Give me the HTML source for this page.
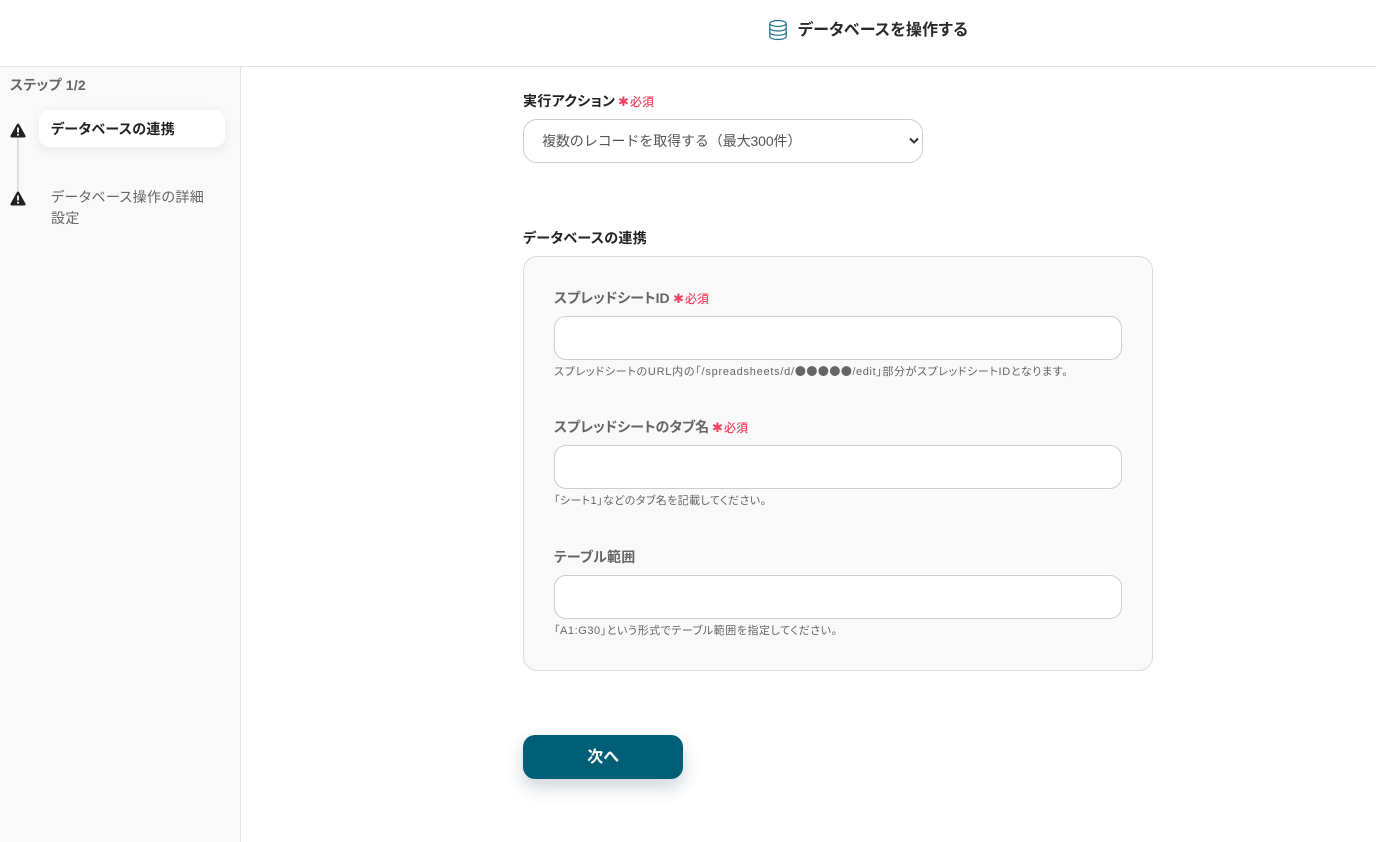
<!DOCTYPE html>
<html lang="ja">
<head>
<meta charset="utf-8">
<style>
html,body{margin:0;padding:0;width:1376px;height:842px;overflow:hidden;background:#fff;font-family:"Liberation Sans","Noto Sans CJK JP",sans-serif;color:#2a2a2a;font-feature-settings:"palt"}
.a{position:absolute;white-space:nowrap}
.b{font-weight:700}
.req{color:#f5405f;font-size:12px;font-weight:500;line-height:16px}
.star{color:#f5405f;font-family:"DejaVu Sans",sans-serif;font-size:13px;line-height:16px}
.lab{font-size:14px;font-weight:700;color:#666;line-height:20px}
.lab2{font-size:14px;font-weight:700;color:#222;line-height:20px;letter-spacing:.33px}
.inp{position:absolute;left:554px;width:566px;height:42px;background:#fff;border:1px solid #c8ced8;border-radius:12px}
.help{font-size:11px;color:#666;line-height:16px}
.c{font-family:"Noto Sans CJK JP",sans-serif;font-feature-settings:normal;letter-spacing:.5px}
</style>
</head>
<body>
<div class="a" style="left:0;top:66px;width:1376px;height:1px;background:#e2e2e2"></div>
<svg class="a" style="left:768px;top:19px" width="20" height="22" viewBox="0 0 20 22" fill="none" stroke="#1f6f8b" stroke-width="1.2">
<ellipse cx="10" cy="4.5" rx="8.2" ry="3"/>
<path d="M1.8 4.5V17.5C1.8 19.2 5.5 20.5 10 20.5S18.2 19.2 18.2 17.5V4.5"/>
<path d="M1.8 9C1.8 10.7 5.500 12 10 12S18.200 10.700 18.200 9"/>
<path d="M1.8 13.3C1.8 15 5.500 16.300 10 16.300S18.200 15 18.200 13.300"/>
</svg>
<div class="a b" style="left:798px;top:19px;font-size:16px;line-height:23px;color:#2a2a2a;letter-spacing:.27px">データベースを操作する</div>

<div class="a" style="left:0;top:67px;width:240px;height:775px;background:#f9f9f9;border-right:1px solid #e2e2e2"></div>
<div class="a b" style="left:10px;top:75px;font-size:14px;line-height:20px;color:#666;letter-spacing:.2px">ステップ 1/2</div>
<div class="a" style="left:17px;top:136px;width:2px;height:60px;background:#e0e0e0"></div>
<svg class="a" style="left:10px;top:123px" width="16" height="15" viewBox="0 0 16 15"><path d="M8 .5a1.3 1.3 0 0 1 1.1.7l6.3 11.3a1.3 1.3 0 0 1-1.1 2H1.7a1.3 1.300 0 0 1-1.1-2L6.900 1.200A1.300 1.300 0 0 1 8 .5z" fill="#222"/><rect x="7.100" y="4.500" width="1.800" height="5" fill="#fff"/><rect x="7.100" y="10.800" width="1.800" height="1.800" fill="#fff"/></svg>
<svg class="a" style="left:10px;top:191px" width="16" height="15" viewBox="0 0 16 15"><path d="M8 .5a1.3 1.3 0 0 1 1.1.7l6.3 11.3a1.3 1.3 0 0 1-1.1 2H1.7a1.3 1.300 0 0 1-1.1-2L6.900 1.200A1.300 1.300 0 0 1 8 .5z" fill="#222"/><rect x="7.100" y="4.500" width="1.800" height="5" fill="#fff"/><rect x="7.100" y="10.800" width="1.800" height="1.800" fill="#fff"/></svg>
<div class="a" style="left:39px;top:110px;width:186px;height:37px;background:#fff;border-radius:10px;box-shadow:0 3px 12px rgba(0,0,0,.07)"></div>
<div class="a b" style="left:51px;top:119px;font-size:14px;line-height:20px;color:#222;letter-spacing:.33px">データベースの連携</div>
<div class="a" style="left:51px;top:187px;font-size:14px;line-height:21px;color:#666;letter-spacing:.42px">データベース操作の詳細<br>設定</div>

<div class="a lab2" style="left:523px;top:91px">実行アクション</div>
<div class="a star" style="left:618px;top:95px">✱</div>
<div class="a req" style="left:630px;top:94px">必須</div>
<div class="a" style="left:523px;top:119px;width:398px;height:42px;background:#fff;border:1px solid #c8ced8;border-radius:14px"></div>
<div class="a" style="left:542px;top:131px;font-size:14px;line-height:21px;color:#555;font-feature-settings:normal;letter-spacing:-.1px">複数のレコードを取得する（最大300件）</div>
<svg class="a" style="left:909px;top:137px" width="10" height="8" viewBox="0 0 10 8" fill="none" stroke="#333" stroke-width="2"><path d="M1 1.500L5 5.500L9 1.500"/></svg>

<div class="a lab2" style="left:523px;top:228px">データベースの連携</div>
<div class="a" style="left:523px;top:256px;width:628px;height:413px;background:#f9f9f9;border:1px solid #d8dce2;border-radius:14px"></div>

<div class="a lab" style="left:554px;top:288px">スプレッドシートID</div>
<div class="a star" style="left:673px;top:292px">✱</div>
<div class="a req" style="left:685px;top:291px">必須</div>
<div class="inp" style="top:316px"></div>
<div class="a help" style="left:554px;top:363px;letter-spacing:.75px">スプレッドシートのURL内の「/spreadsheets/d/<span class="c">●●●●●</span><span style="letter-spacing:.62px">/edit」部分がスプレッドシートIDとなります。</span></div>

<div class="a lab" style="left:554px;top:417px">スプレッドシートのタブ名</div>
<div class="a star" style="left:712px;top:421px">✱</div>
<div class="a req" style="left:724px;top:420px">必須</div>
<div class="inp" style="top:445px"></div>
<div class="a help" style="left:554px;top:493px;letter-spacing:.39px">「シート1」などのタブ名を記載してください。</div>

<div class="a lab" style="left:554px;top:547px;letter-spacing:.2px">テーブル範囲</div>
<div class="inp" style="top:575px"></div>
<div class="a help" style="left:554px;top:623px;letter-spacing:.55px">「A1:G30」という形式でテーブル範囲を指定してください。</div>

<div class="a b" style="left:523px;top:735px;width:160px;height:44px;background:#005f76;border-radius:12px;box-shadow:0 8px 18px rgba(0,40,60,.2);color:#fff;font-size:16px;line-height:46px;text-align:center">次へ</div>
</body>
</html>
